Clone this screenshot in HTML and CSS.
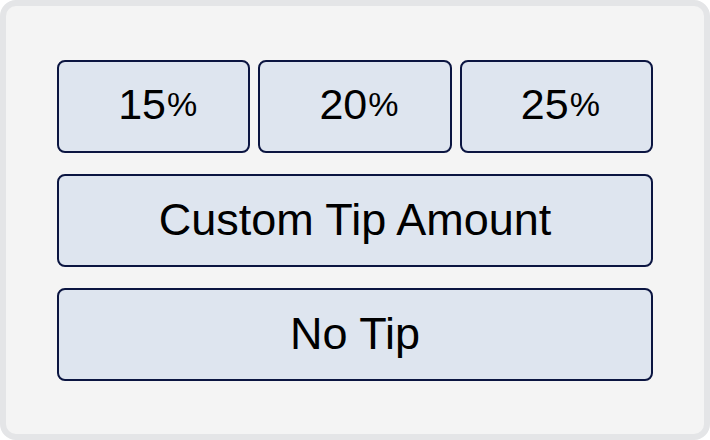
FILE: index.html
```html
<!DOCTYPE html>
<html>
<head>
<meta charset="utf-8">
<link rel="stylesheet" href="styles.css">
</head>
<body>
<div class="frame">
  <div class="tips">
    <button class="btn pct-btn">15<span class="pct">%</span></button>
    <button class="btn pct-btn">20<span class="pct">%</span></button>
    <button class="btn pct-btn">25<span class="pct">%</span></button>
    <button class="btn wide">Custom Tip Amount</button>
    <button class="btn wide">No Tip</button>
  </div>
</div>
</body>
</html>
```
FILE: styles.css
```css
html, body {
  margin: 0;
  padding: 0;
}
body {
  width: 710px;
  height: 440px;
  font-family: "Liberation Sans", Arial, sans-serif;
}
.frame {
  box-sizing: border-box;
  width: 710px;
  height: 440px;
  border: 6px solid #e4e5e7;
  border-radius: 16px;
  background: #f4f4f4;
  display: flex;
  align-items: center;
  justify-content: center;
}
.tips {
  width: 596px;
  display: grid;
  grid-template-columns: 1fr 1fr 1fr;
  column-gap: 8px;
  row-gap: 21px;
}
.btn {
  box-sizing: border-box;
  height: 93px;
  margin: 0;
  padding: 0;
  border: 2px solid #0b1541;
  border-radius: 8px;
  background: #dee5ef;
  color: #000;
  font-family: "Liberation Sans", Arial, sans-serif;
  display: flex;
  align-items: center;
  justify-content: center;
}
.pct-btn {
  font-size: 43px;
  padding-left: 8px;
  padding-bottom: 4px;
}
.pct {
  font-size: 34px;
  margin-left: 1px;
}
.wide {
  grid-column: 1 / -1;
  font-size: 45px;
}
```
